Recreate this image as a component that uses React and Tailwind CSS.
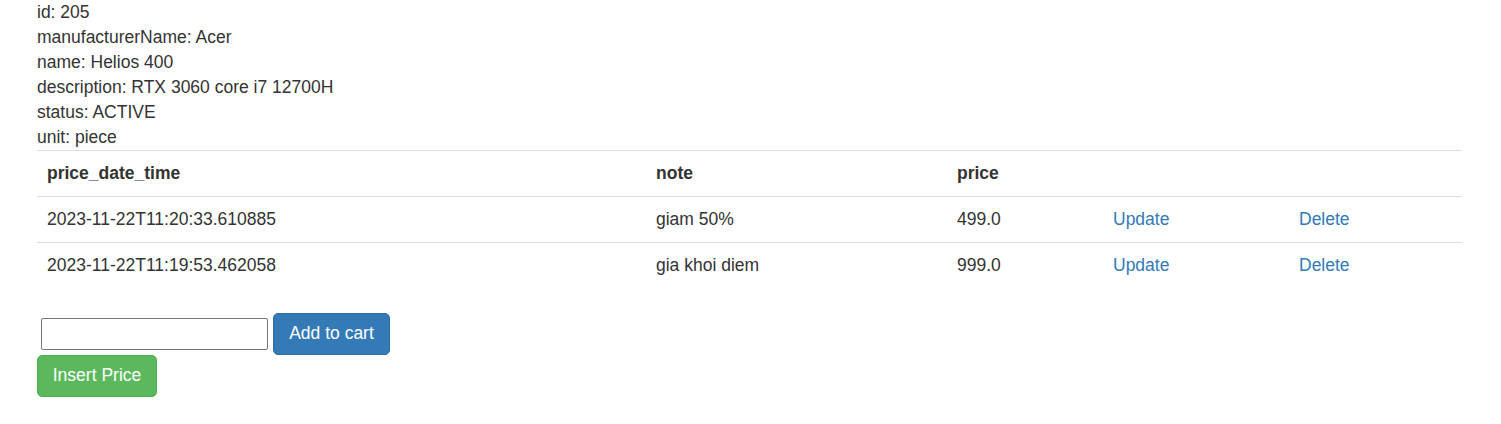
const rows = [
  { time: "2023-11-22T11:20:33.610885", note: "giam 50%", price: "499.0" },
  { time: "2023-11-22T11:19:53.462058", note: "gia khoi diem", price: "999.0" },
];

export default function App() {
  return (
    <div className="min-h-screen bg-white px-[37px] font-['Liberation_Sans',Arial,sans-serif] text-[17.5px] leading-[25px] text-[#333]">
      <div>
        <div>id: 205</div>
        <div>manufacturerName: Acer</div>
        <div>name: Helios 400</div>
        <div>description: RTX 3060 core i7 12700H</div>
        <div>status: ACTIVE</div>
        <div>unit: piece</div>
      </div>

      <table className="mb-[24px] w-[1425px] table-fixed border-collapse">
        <colgroup>
          <col className="w-[609px]" />
          <col className="w-[301px]" />
          <col className="w-[156px]" />
          <col className="w-[186px]" />
          <col className="w-[173px]" />
        </colgroup>
        <thead>
          <tr className="h-[46px]">
            <th className="border-y border-[#ddd] px-[10px] text-left align-middle font-bold">
              price_date_time
            </th>
            <th className="border-y border-[#ddd] px-[10px] text-left align-middle font-bold">
              note
            </th>
            <th className="border-y border-[#ddd] px-[10px] text-left align-middle font-bold">
              price
            </th>
            <th className="border-y border-[#ddd] px-[10px]" />
            <th className="border-y border-[#ddd] px-[10px]" />
          </tr>
        </thead>
        <tbody>
          {rows.map((r, i) => (
            <tr key={r.time} className="h-[46px]">
              <td className={`px-[10px] align-middle ${i > 0 ? "border-t border-[#ddd]" : ""}`}>{r.time}</td>
              <td className={`px-[10px] align-middle ${i > 0 ? "border-t border-[#ddd]" : ""}`}>{r.note}</td>
              <td className={`px-[10px] align-middle ${i > 0 ? "border-t border-[#ddd]" : ""}`}>{r.price}</td>
              <td className={`px-[10px] align-middle ${i > 0 ? "border-t border-[#ddd]" : ""}`}>
                <a href="#" className="text-[#337ab7]">Update</a>
              </td>
              <td className={`px-[10px] align-middle ${i > 0 ? "border-t border-[#ddd]" : ""}`}>
                <a href="#" className="text-[#337ab7]">Delete</a>
              </td>
            </tr>
          ))}
        </tbody>
      </table>

      <div className="flex items-center gap-[5px]">
        <input
          type="text"
          className="ml-[4px] h-[32px] w-[227px] rounded-[2px] border border-[#767676] bg-white px-[3px]"
        />
        <button
          type="button"
          className="h-[42px] w-[117px] rounded-[5px] border border-[#2e6da4] bg-[#337ab7] text-[17.5px] text-white"
        >
          Add to cart
        </button>
      </div>
      <button
        type="button"
        className="h-[42px] w-[120px] rounded-[5px] border border-[#4cae4c] bg-[#5cb85c] text-[17.5px] text-white"
      >
        Insert Price
      </button>
    </div>
  );
}
